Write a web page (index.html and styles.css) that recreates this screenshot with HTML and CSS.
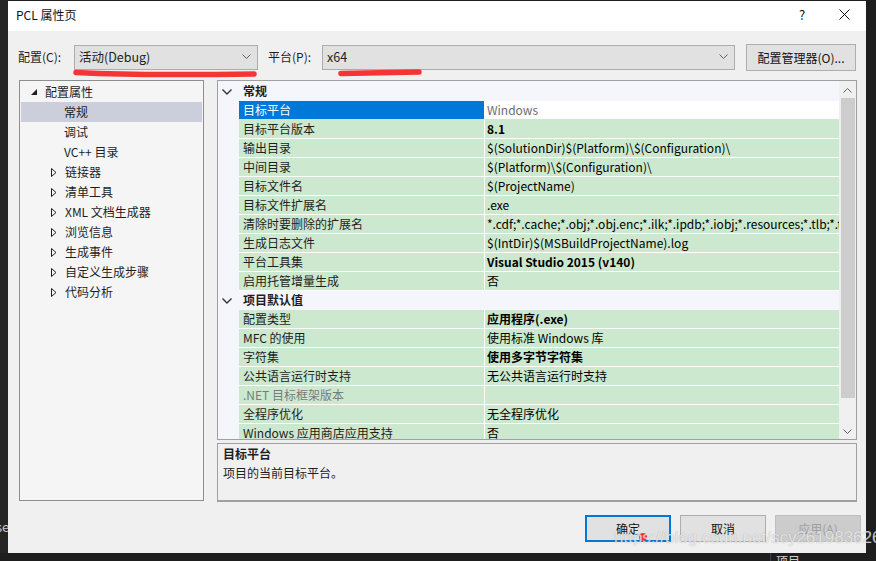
FILE: index.html
```html
<!DOCTYPE html>
<html lang="zh-CN">
<head>
  <meta charset="UTF-8" />
  <title>PCL 属性页</title>
  <link rel="stylesheet" href="styles.css">
</head>
<body>

  <div class="ide-left"><span>se</span></div>
  <div class="ide-bottom"><span>项目</span></div>

  <div class="dialog">
    <div class="titlebar">
      <span class="title">PCL 属性页</span>
      <span class="help">?</span>
      <span class="close">
        <svg width="11" height="11" viewBox="0 0 11 11"><path d="M0.5 0.5 L10.5 10.5 M10.5 0.5 L0.5 10.5" stroke="#111" stroke-width="1" fill="none"/></svg>
      </span>
    </div>

    <div class="config-row">
      <label class="lbl lbl-config">配置(C):</label>
      <div class="combo combo-config">
        <span>活动(Debug)</span>
        <svg class="caret" width="9" height="5" viewBox="0 0 9 5"><path d="M0.5 0.5 L4.5 4.5 L8.5 0.5" stroke="#606060" fill="none"/></svg>
      </div>
      <label class="lbl lbl-platform">平台(P):</label>
      <div class="combo combo-platform">
        <span>x64</span>
        <svg class="caret" width="9" height="5" viewBox="0 0 9 5"><path d="M0.5 0.5 L4.5 4.5 L8.5 0.5" stroke="#606060" fill="none"/></svg>
      </div>
      <button class="btn btn-manager">配置管理器(O)...</button>
    </div>

    <div class="main">
      <ul class="tree">
        <li class="node root">
          <svg class="tri" width="6" height="6" viewBox="0 0 6 6"><path d="M6 0 L6 6 L0 6 Z" fill="#1e1e1e"/></svg>
          配置属性
        </li>
        <li class="node leaf selected">常规</li>
        <li class="node leaf">调试</li>
        <li class="node leaf">VC++ 目录</li>
        <li class="node branch"><svg class="tri" width="6" height="9" viewBox="0 0 6 9"><path d="M0.5 0.5 L5 4.5 L0.5 8.5 Z" fill="none" stroke="#1e1e1e"/></svg>链接器</li>
        <li class="node branch"><svg class="tri" width="6" height="9" viewBox="0 0 6 9"><path d="M0.5 0.5 L5 4.5 L0.5 8.5 Z" fill="none" stroke="#1e1e1e"/></svg>清单工具</li>
        <li class="node branch"><svg class="tri" width="6" height="9" viewBox="0 0 6 9"><path d="M0.5 0.5 L5 4.5 L0.5 8.5 Z" fill="none" stroke="#1e1e1e"/></svg>XML 文档生成器</li>
        <li class="node branch"><svg class="tri" width="6" height="9" viewBox="0 0 6 9"><path d="M0.5 0.5 L5 4.5 L0.5 8.5 Z" fill="none" stroke="#1e1e1e"/></svg>浏览信息</li>
        <li class="node branch"><svg class="tri" width="6" height="9" viewBox="0 0 6 9"><path d="M0.5 0.5 L5 4.5 L0.5 8.5 Z" fill="none" stroke="#1e1e1e"/></svg>生成事件</li>
        <li class="node branch"><svg class="tri" width="6" height="9" viewBox="0 0 6 9"><path d="M0.5 0.5 L5 4.5 L0.5 8.5 Z" fill="none" stroke="#1e1e1e"/></svg>自定义生成步骤</li>
        <li class="node branch"><svg class="tri" width="6" height="9" viewBox="0 0 6 9"><path d="M0.5 0.5 L5 4.5 L0.5 8.5 Z" fill="none" stroke="#1e1e1e"/></svg>代码分析</li>
      </ul>

      <div class="right">
        <div class="grid">
          <div class="rows">
            <div class="cat">
              <span class="gutter"><svg width="10" height="6" viewBox="0 0 10 6"><path d="M0.5 0.5 L5 5 L9.5 0.5" stroke="#333" stroke-width="1.4" fill="none"/></svg></span>
              <span class="cat-name">常规</span>
            </div>
            <div class="prop selected"><span class="gutter"></span><span class="name">目标平台</span><span class="value">Windows</span></div>
            <div class="prop"><span class="gutter"></span><span class="name">目标平台版本</span><span class="value bold">8.1</span></div>
            <div class="prop"><span class="gutter"></span><span class="name">输出目录</span><span class="value">$(SolutionDir)$(Platform)\$(Configuration)\</span></div>
            <div class="prop"><span class="gutter"></span><span class="name">中间目录</span><span class="value">$(Platform)\$(Configuration)\</span></div>
            <div class="prop"><span class="gutter"></span><span class="name">目标文件名</span><span class="value">$(ProjectName)</span></div>
            <div class="prop"><span class="gutter"></span><span class="name">目标文件扩展名</span><span class="value">.exe</span></div>
            <div class="prop"><span class="gutter"></span><span class="name">清除时要删除的扩展名</span><span class="value">*.cdf;*.cache;*.obj;*.obj.enc;*.ilk;*.ipdb;*.iobj;*.resources;*.tlb;*.tli;*.tlh;*.tmp</span></div>
            <div class="prop"><span class="gutter"></span><span class="name">生成日志文件</span><span class="value">$(IntDir)$(MSBuildProjectName).log</span></div>
            <div class="prop"><span class="gutter"></span><span class="name">平台工具集</span><span class="value bold">Visual Studio 2015 (v140)</span></div>
            <div class="prop"><span class="gutter"></span><span class="name">启用托管增量生成</span><span class="value">否</span></div>
            <div class="cat">
              <span class="gutter"><svg width="10" height="6" viewBox="0 0 10 6"><path d="M0.5 0.5 L5 5 L9.5 0.5" stroke="#333" stroke-width="1.4" fill="none"/></svg></span>
              <span class="cat-name">项目默认值</span>
            </div>
            <div class="prop"><span class="gutter"></span><span class="name">配置类型</span><span class="value bold">应用程序(.exe)</span></div>
            <div class="prop"><span class="gutter"></span><span class="name">MFC 的使用</span><span class="value">使用标准 Windows 库</span></div>
            <div class="prop"><span class="gutter"></span><span class="name">字符集</span><span class="value bold">使用多字节字符集</span></div>
            <div class="prop"><span class="gutter"></span><span class="name">公共语言运行时支持</span><span class="value">无公共语言运行时支持</span></div>
            <div class="prop"><span class="gutter"></span><span class="name disabled">.NET 目标框架版本</span><span class="value"></span></div>
            <div class="prop"><span class="gutter"></span><span class="name">全程序优化</span><span class="value">无全程序优化</span></div>
            <div class="prop"><span class="gutter"></span><span class="name">Windows 应用商店应用支持</span><span class="value">否</span></div>
          </div>
          <div class="scrollbar">
            <svg class="arrow" width="9" height="5" viewBox="0 0 9 5"><path d="M0.5 4.5 L4.5 0.5 L8.5 4.5" stroke="#606060" fill="none"/></svg>
            <div class="thumb"></div>
            <svg class="arrow" width="9" height="5" viewBox="0 0 9 5"><path d="M0.5 0.5 L4.5 4.5 L8.5 0.5" stroke="#606060" fill="none"/></svg>
          </div>
        </div>

        <div class="desc">
          <div class="desc-title">目标平台</div>
          <div class="desc-text">项目的当前目标平台。</div>
        </div>
      </div>
    </div>

    <div class="buttons">
      <button class="btn btn-ok">确定</button>
      <button class="btn">取消</button>
      <button class="btn btn-disabled">应用(A)</button>
    </div>
  </div>

  <!-- red marker strokes drawn over the screenshot -->
  <svg class="marks" width="876" height="561" viewBox="0 0 876 561">
    <path d="M76 72.5 Q120 74.5 170 74.5 T254 74" stroke="#f53535" stroke-width="5.5" stroke-linecap="round" fill="none"/>
    <path d="M341 73.5 Q380 72.5 419 72" stroke="#f53535" stroke-width="5.5" stroke-linecap="round" fill="none"/>
    <circle cx="643" cy="537" r="4" fill="#f53535"/>
  </svg>

  <div class="watermark">https://blog.csdn.net/scy261983626</div>

</body>
</html>
```

FILE: styles.css
```css
* { box-sizing: border-box; margin: 0; padding: 0; }
body {
  width: 876px;
  height: 561px;
  overflow: hidden;
  position: relative;
  background: #1e1e1e;
  font-family: "Noto Sans CJK SC", "Noto Sans", sans-serif;
  font-size: 12px;
  color: #1e1e1e;
}

/* IDE bits peeking around the dialog */
.ide-left {
  position: absolute;
  left: 0; top: 0;
  width: 8px; height: 553px;
  background: #252526;
  overflow: hidden;
}
.ide-left span {
  position: absolute;
  left: -4px; top: 517px;
  color: #c8c8c8;
  font-size: 13px;
}
.ide-bottom {
  position: absolute;
  left: 770px; top: 553px;
  width: 106px; height: 8px;
  border-left: 1px solid #3f3f46;
  overflow: hidden;
}
.ide-bottom span {
  position: absolute;
  left: 5px; top: 0;
  color: #d0d0d0;
  line-height: 16px;
}

.dialog {
  position: relative;
  width: 858px;
  height: 552px;
  margin: 1px 0 0 8px;
  background: #f0f0f0;
  display: flex;
  flex-direction: column;
}

.titlebar {
  height: 30px;
  background: #fff;
  display: flex;
  align-items: center;
  padding: 0 0 3px 8px;
  color: #111;
}
.title { flex: 1; }
.help { width: 20px; font-size: 13px; margin-right: 27px; text-align: center; }
.close { width: 11px; height: 11px; margin-right: 16px; display: flex; }

.config-row {
  display: flex;
  align-items: center;
  height: 28px;
  margin-top: 13px;
  padding-left: 10px;
}
.lbl { line-height: 16px; margin-top: -2px; }
.lbl-config { width: 56px; }
.lbl-platform { width: 54px; margin-left: 10px; }
.combo {
  height: 25px;
  margin-top: -2px;
  background: #e1e1e1;
  border: 1px solid #acacac;
  display: flex;
  align-items: center;
  justify-content: space-between;
  padding: 0 6px 1px 4px;
  font-size: 12.5px;
}
.combo-config { width: 184px; }
.combo-platform { width: 413px; }
.caret { flex: none; }

.btn {
  height: 27px;
  background: #e1e1e1;
  border: 1px solid #adadad;
  font-family: inherit;
  font-size: 12px;
  color: #111;
}
.btn-manager { width: 110px; margin-left: 11px; margin-top: -1px; }

.main {
  display: flex;
  gap: 13px;
  margin-top: 8px;
  padding-left: 11px;
}

.tree {
  list-style: none;
  width: 185px;
  height: 421px;
  background: #f5f5f5;
  border: 1px solid #8e8e8e;
  padding: 1px;
}
.node {
  height: 20px;
  line-height: 19px;
  padding-bottom: 2px;
  display: flex;
  align-items: center;
  white-space: nowrap;
}
.node .tri { flex: none; }
.root { padding-left: 10px; }
.root .tri { margin-right: 8px; margin-top: 1px; }
.leaf { padding-left: 43px; }
.branch { padding-left: 30px; }
.branch .tri { margin-right: 8px; margin-top: 2px; }
.node.selected { background: #cccedb; }

.right {
  width: 640px;
  display: flex;
  flex-direction: column;
  gap: 3px;
}

.grid {
  height: 360px;
  border: 1px solid #a0a0a0;
  background: #f4f6fb;
  display: flex;
  overflow: hidden;
}
.rows {
  width: 621px;
  padding-top: 1px;
}
.cat, .prop {
  display: flex;
  height: 19px;
  line-height: 18px;
  white-space: nowrap;
}
.gutter {
  width: 21px;
  flex: none;
  display: flex;
  align-items: center;
  justify-content: center;
}
.cat .gutter svg { margin-left: -4px; }
.cat-name { font-weight: bold; padding-left: 4px; }
.prop .name {
  width: 246px;
  flex: none;
  background: #cce8cf;
  border-right: 1px solid #fff;
  border-bottom: 1px solid #fff;
  padding-left: 4px;
  overflow: hidden;
}
.prop .value {
  flex: 1;
  background: #cce8cf;
  border-bottom: 1px solid #fff;
  padding-left: 2px;
  color: #000;
  overflow: hidden;
}
.value.bold { font-weight: bold; }
.name.disabled { color: #7a7a7a; }
.prop.selected .name { background: #0078d7; color: #fff; border-bottom-color: #cce8cf; }
.prop.selected .value { background: #fff; color: #6d6d6d; border-bottom-color: #cce8cf; }

.scrollbar {
  width: 17px;
  background: #f0f0f0;
  display: flex;
  flex-direction: column;
  align-items: center;
}
.scrollbar .arrow { margin: 7px 0 5px; flex: none; }
.thumb {
  width: 14px;
  height: 306px;
  background: #cdcdcd;
  margin-bottom: 24px;
}

.desc {
  height: 59px;
  background: #f0f0f0;
  border: 1px solid #a0a0a0;
  border-bottom-width: 2px;
  padding: 0 5px;
  line-height: 19px;
}
.desc-title { font-weight: bold; }

.buttons {
  display: flex;
  justify-content: flex-end;
  gap: 9px;
  margin-top: 13px;
  padding-right: 5px;
}
.buttons .btn { width: 86px; }
.btn-ok { border: 2px solid #0078d7; }
.btn-disabled { background: #cccccc; border-color: #bfbfbf; color: #a0a0a0; }

.marks {
  position: absolute;
  left: 0; top: 0;
  pointer-events: none;
}

.watermark {
  position: absolute;
  left: 614px; top: 528px;
  font-family: "Liberation Sans", sans-serif;
  font-size: 17px;
  color: rgba(255, 255, 255, 0.7);
  text-shadow: 0 0 1px rgba(110, 110, 110, 0.55);
  white-space: nowrap;
}
```
